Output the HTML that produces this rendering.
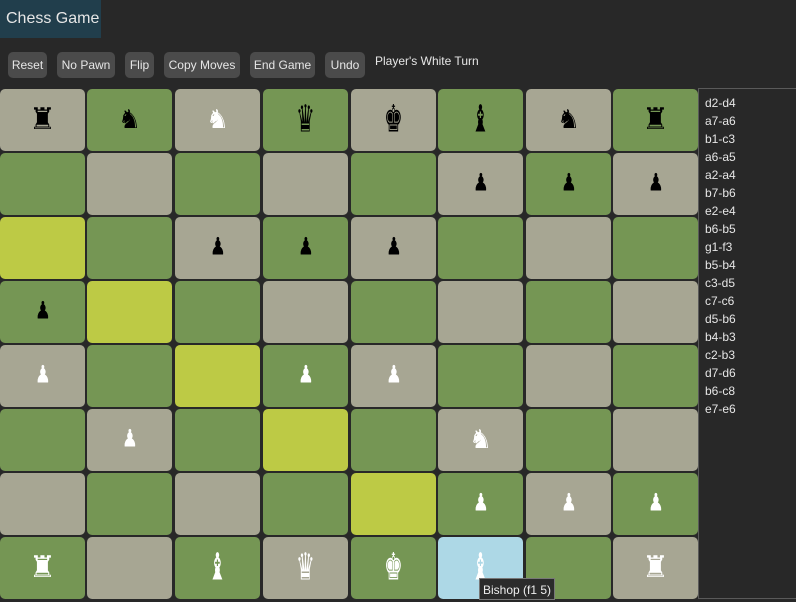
<!DOCTYPE html><html><head><style>
body{margin:0;width:796px;height:602px;background:#282828;overflow:hidden;font-family:"Liberation Sans","DejaVu Sans",sans-serif;position:relative}
.t{position:absolute;left:0;top:0;width:101px;height:38px;background:#213e4c;color:#e6e6e6;font-size:16px;line-height:38px;text-indent:6px}
.b{position:absolute;top:52px;height:26px;background:#4b4b4b;border-radius:5px;color:#e6e6e6;font-size:12px;line-height:27px;text-align:center}
.c{position:absolute;border-radius:5px;display:flex;align-items:center;justify-content:center;font-family:"DejaVu Sans",sans-serif;line-height:1}
.c span{display:inline-block}
.L{background:#a7a693}.G{background:#759654}.Y{background:#bdca45}.B{background:#add8e6}
.k{color:#000}.w{color:#fff}
.list{position:absolute;left:698px;top:88px;width:98px;height:511px;border:1px solid #5a5a5a;border-right:none;box-sizing:border-box;color:#e6e6e6;font-size:12px;line-height:18px;padding:5px 0 0 6px}
.tip{position:absolute;left:479px;top:578px;width:76px;height:22px;background:#2b2b2b;border:1px solid #777;color:#eee;font-size:12px;line-height:22px;box-sizing:border-box;text-align:center}
</style></head><body>
<div class="t">Chess Game</div>
<div class="b" style="left:8px;width:39px">Reset</div>
<div class="b" style="left:57px;width:58px">No Pawn</div>
<div class="b" style="left:125px;width:29px">Flip</div>
<div class="b" style="left:164px;width:76px">Copy Moves</div>
<div class="b" style="left:250px;width:65px">End Game</div>
<div class="b" style="left:325px;width:40px">Undo</div>
<div style="position:absolute;left:375px;top:54px;color:#e6e6e6;font-size:12px">Player's White Turn</div>
<div id="bd"></div>
<div class="list">d2-d4<br>a7-a6<br>b1-c3<br>a6-a5<br>a2-a4<br>b7-b6<br>e2-e4<br>b6-b5<br>g1-f3<br>b5-b4<br>c3-d5<br>c7-c6<br>d5-b6<br>b4-b3<br>c2-b3<br>d7-d6<br>b6-c8<br>e7-e6</div>
<script>
var P={
'0,0':'k♜','0,1':'k♞','0,2':'w♞','0,3':'k♛','0,4':'k♚','0,5':'k♝','0,6':'k♞','0,7':'k♜',
'1,5':'k♟','1,6':'k♟','1,7':'k♟','2,2':'k♟','2,3':'k♟','2,4':'k♟','3,0':'k♟',
'4,0':'w♟','4,3':'w♟','4,4':'w♟','5,1':'w♟','5,5':'w♞','6,5':'w♟','6,6':'w♟','6,7':'w♟',
'7,0':'w♜','7,2':'w♝','7,3':'w♛','7,4':'w♚','7,5':'w♝','7,7':'w♜'};
var Y={'2,0':1,'3,1':1,'4,2':1,'5,3':1,'6,4':1},h='';
var xs=[0,87,175,263,351,438,526,613];
for(var r=0;r<8;r++)for(var c=0;c<8;c++){var k=r+','+c;var cl=Y[k]?'Y':(k=='7,5'?'B':((r+c)%2==0?'L':'G'));
var p=P[k]||'',g=p[1],fs=g=='♟'?22:(g=='♞'?26:30),tr=(g=='♛'||g=='♚'||g=='♝')?'scale(0.7,1.25)':(g=='♟'?'scale(0.8,1.1)':'');
h+='<div class="c '+cl+' '+(p?p[0]:'')+'" style="left:'+xs[c]+'px;top:'+(89+r*64)+'px;width:85px;height:62px;font-size:'+fs+'px">'+(p?'<span style="transform:'+tr+'">'+g+'</span>':'')+'</div>';}
document.getElementById('bd').innerHTML=h;
</script>
<div class="tip">Bishop (f1 5)</div>
</body></html>
